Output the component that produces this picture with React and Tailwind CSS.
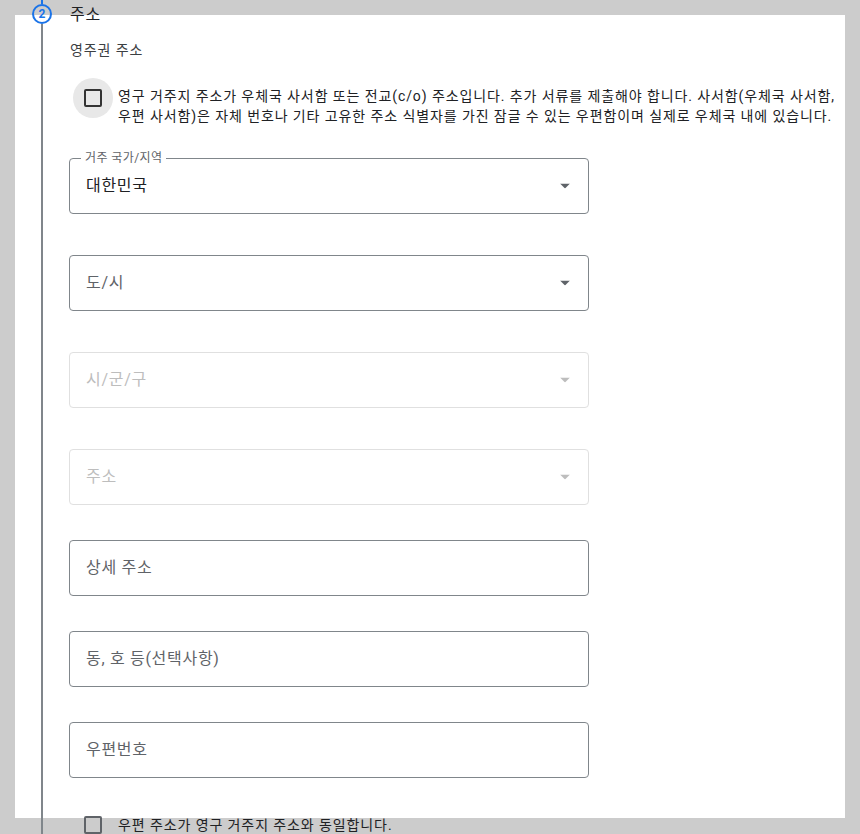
import React from "react";

function Arrow({ disabled }) {
  return (
    <svg width="10" height="5" viewBox="0 0 10 5" className="absolute right-[18px] top-1/2 -translate-y-1/2">
      <path d="M0 0h10L5 5z" fill={disabled ? "#bdbdbd" : "#5f6368"} />
    </svg>
  );
}

function Field({ text, label, select, disabled, strong, className }) {
  return (
    <div
      className={
        "relative flex h-[56px] w-[520px] items-center rounded-[4px] border px-[16px] " +
        (disabled ? "border-[#e0e0e0] " : "border-[#80868b] ") +
        className
      }
    >
      {label && (
        <span className="absolute -top-[9px] left-[11px] bg-white px-[4px] text-[12px] leading-[16px] tracking-[0.4px] text-[#5f6368]">
          {label}
        </span>
      )}
      <span
        className={
          "text-[16px] leading-[24px] " +
          (disabled ? "text-[#bdbdbd]" : strong ? "text-[#202124]" : "text-[#5f6368]")
        }
      >
        {text}
      </span>
      {select && <Arrow disabled={disabled} />}
    </div>
  );
}

export default function App() {
  return (
    <div className="h-[834px] overflow-hidden bg-[#cccccc] px-[15px] pt-[15px] tracking-[0.7px] font-['Roboto','Noto_Sans_CJK_KR',sans-serif]">
      <div className="flow-root h-[803px] bg-white">
        <div className="-mt-[15px] flex pl-[17px]">
          <div className="flex w-[20px] shrink-0 flex-col items-center">
            <div className="h-[4px] w-[2px] bg-[#1a73e8]" />
            <div className="flex h-[20px] w-[20px] items-center justify-center rounded-full border-2 border-[#1a73e8] text-[12px] font-bold leading-none tracking-normal text-[#1a73e8]">
              2
            </div>
            <div className="w-[2px] flex-1 bg-[#80868b]" />
          </div>
          <div className="ml-[17px] flex flex-col pb-[60px]">
            <div className="mt-[3px] pl-px text-[16px] leading-[24px] text-[#202124]">주소</div>
            <div className="mt-[13px] pl-px text-[14px] leading-[20px] tracking-[0.9px] text-[#3c4043]">영주권 주소</div>
            <div className="mt-[18px] flex items-start">
              <div className="ml-[4px] flex h-[40px] w-[40px] shrink-0 items-center justify-center rounded-full bg-[#e8e8e8]">
                <div className="h-[18px] w-[18px] rounded-[2px] border-2 border-[#333333]" />
              </div>
              <div className="ml-[5px] mt-[8px] text-[14px] leading-[20px] tracking-[0.9px] text-[#202124]">
                <span className="block whitespace-nowrap">
                  영구 거주지 주소가 우체국 사서함 또는 전교(c/o) 주소입니다. 추가 서류를 제출해야 합니다. 사서함(우체국 사서함,
                </span>
                <span className="block whitespace-nowrap">
                  우편 사서함)은 자체 번호나 기타 고유한 주소 식별자를 가진 잠글 수 있는 우편함이며 실제로 우체국 내에 있습니다.
                </span>
              </div>
            </div>
            <Field className="mt-[32px]" label="거주 국가/지역" text="대한민국" select strong />
            <Field className="mt-[41px]" text="도/시" select />
            <Field className="mt-[41px]" text="시/군/구" select disabled />
            <Field className="mt-[41px]" text="주소" select disabled />
            <Field className="mt-[35px]" text="상세 주소" />
            <Field className="mt-[35px]" text="동, 호 등(선택사항)" />
            <Field className="mt-[35px]" text="우편번호" />
            <div className="mt-[37px] flex h-[20px] items-center">
              <div className="ml-[15px] h-[18px] w-[18px] shrink-0 rounded-[2px] border-2 border-[#5f6368]" />
              <span className="ml-[16px] whitespace-nowrap text-[14px] leading-[20px] tracking-[0.9px] text-[#202124]">
                우편 주소가 영구 거주지 주소와 동일합니다.
              </span>
            </div>
          </div>
        </div>
      </div>
    </div>
  );
}
